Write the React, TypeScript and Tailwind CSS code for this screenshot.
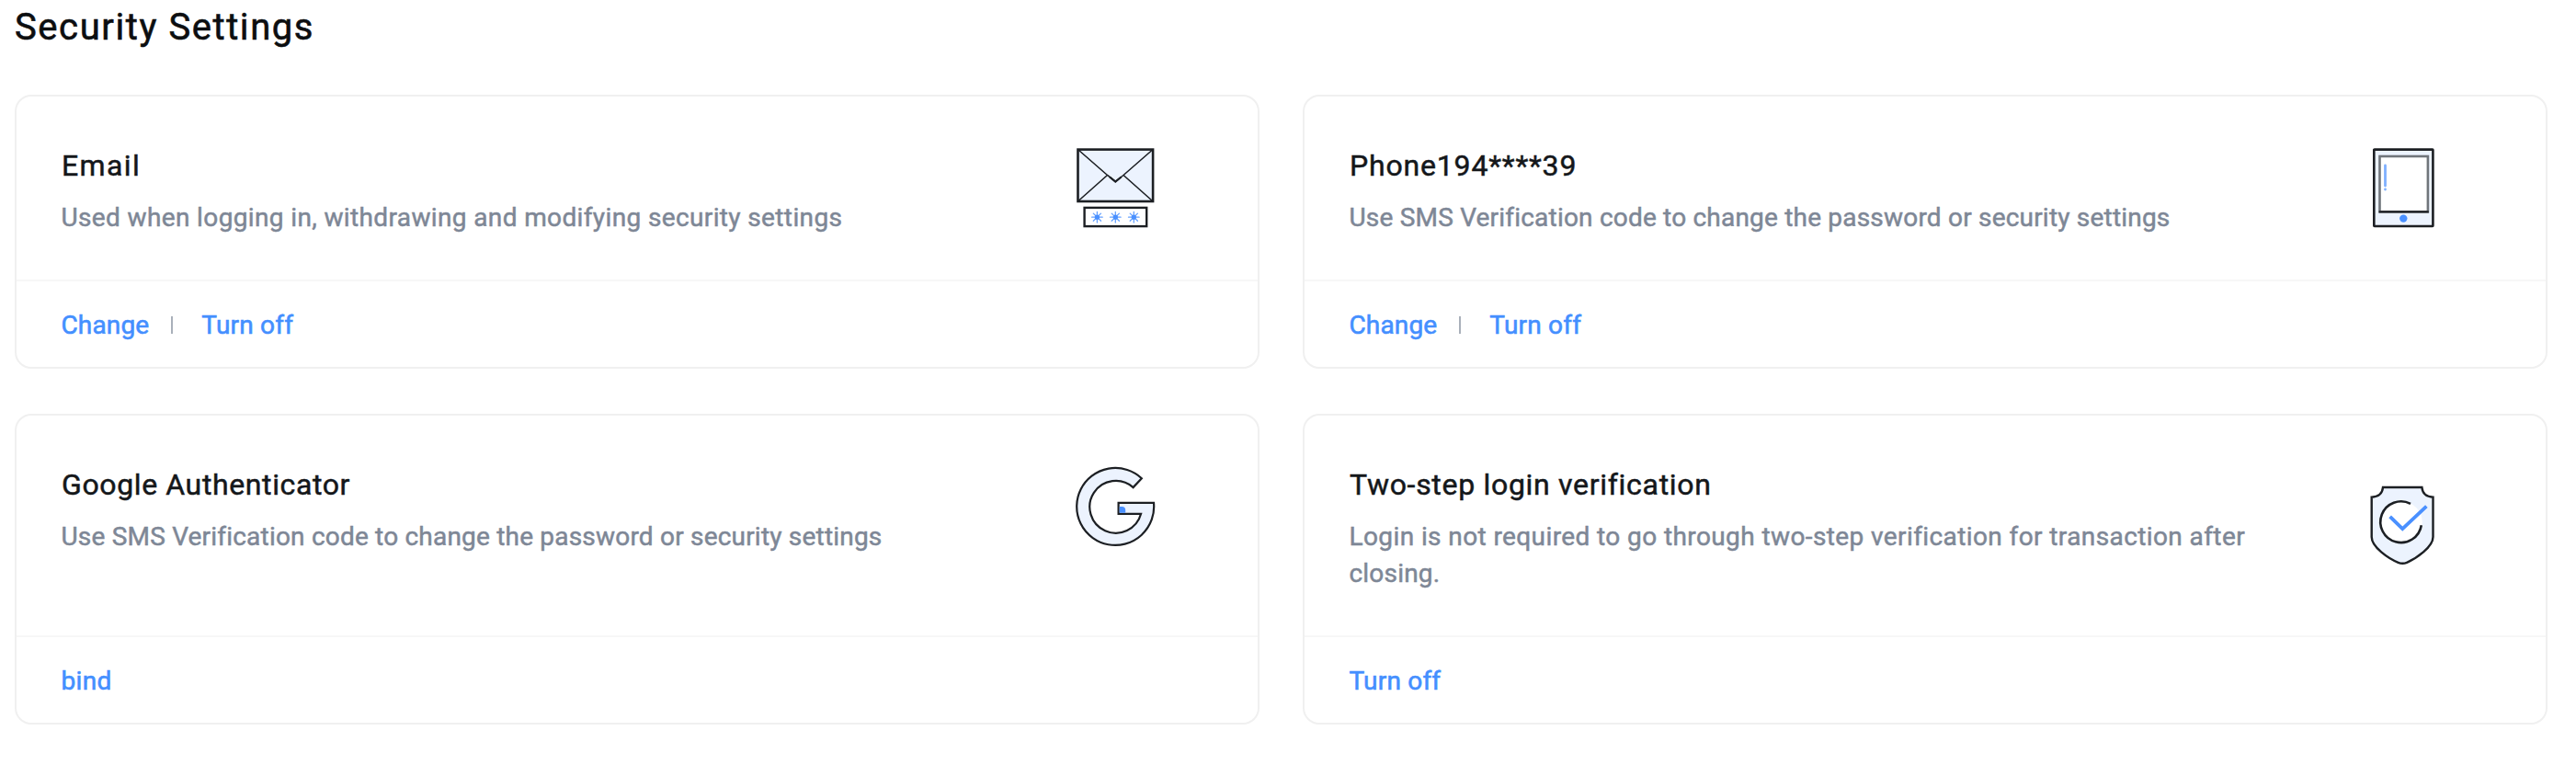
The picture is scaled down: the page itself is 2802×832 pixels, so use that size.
import React from "react";

const INK = "#1c1f23";
const TINT = "#ecf3fe";
const BLUE = "#4a90ff";

function Star({ x, y }: { x: number; y: number }) {
  return (
    <g transform={`translate(${x} ${y})`} stroke={BLUE} strokeWidth="1.3" strokeLinecap="round">
      <path d="M-5.8 0H5.8M0 -5.8V5.8M-4.1 -4.1L4.1 4.1M-4.1 4.1L4.1 -4.1" opacity="0.85" />
      <circle r="2.6" fill={BLUE} stroke="none" />
    </g>
  );
}

function EmailIcon() {
  return (
    <svg viewBox="0 0 88 88" className="size-22" fill="none">
      <rect x="3.5" y="2.6" width="81.6" height="56.4" fill={TINT} stroke={INK} strokeWidth="2.6" />
      <path d="M4 3L35.5 30.5L44.3 37.5L53 30.5L84.5 3M4 58.5L35.5 30.5M84.5 58.5L53 30.5" stroke={INK} strokeWidth="1.6" />
      <path d="M38 32.5L44.3 37.5L50.6 32.5" stroke={INK} strokeWidth="2.2" />
      <rect x="10.6" y="65.9" width="67.6" height="20.2" fill="#fff" stroke={INK} strokeWidth="2.4" />
      <Star x={24.4} y={76.2} />
      <Star x={44.3} y={76.2} />
      <Star x={64.3} y={76.2} />
    </svg>
  );
}

function PhoneIcon() {
  return (
    <svg viewBox="0 0 88 88" className="size-22" fill="none">
      <rect x="12.3" y="2.6" width="64.1" height="83.4" rx="0.5" fill={TINT} stroke={INK} strokeWidth="2.6" />
      <rect x="18.5" y="10" width="52.4" height="60.3" fill="#fff" stroke="#70757b" strokeWidth="2.6" />
      <path d="M17.6 70.4H71.8" stroke={INK} strokeWidth="2.4" />
      <path d="M24.5 20V42" stroke="#7fb0ff" strokeWidth="2.8" strokeLinecap="round" />
      <circle cx="24.5" cy="46" r="1.4" fill="#7fb0ff" />
      <circle cx="44.3" cy="77.6" r="4.2" fill={BLUE} />
    </svg>
  );
}

function GoogleIcon() {
  return (
    <svg viewBox="0 0 88 88" className="size-22" fill="none">
      <path
        d="M72.8 13.2A42 42 0 1 0 86 39.9H47.6V51.8H72.1A28.4 28.4 0 1 1 63.6 23.1Z"
        fill={TINT}
        stroke={INK}
        strokeWidth="2.2"
      />
      <path d="M48.7 44H51.4A3.8 3.8 0 0 1 55.2 47.8V50.7H48.7Z" fill={BLUE} />
    </svg>
  );
}

function ShieldIcon() {
  return (
    <svg viewBox="0 0 88 88" className="size-22" fill="none">
      <path
        d="M22 3H64.4C65 9.5 69.5 13.4 76.5 13.7V57C76.5 68 58 80.5 48 84.8Q43.3 86.8 38.6 84.8C28 80.5 9.7 68 9.7 57V13.7C17 13.4 21.4 9.5 22 3Z"
        fill={TINT}
        stroke={INK}
        strokeWidth="2.4"
      />
      <circle cx="42.2" cy="41" r="22.6" fill="#fff" />
      <path d="M52 20.8A22.4 22.4 0 1 0 63.8 44.2" stroke={INK} strokeWidth="2.6" />
      <path d="M31 36.2L43.3 48.2L68 25" stroke={BLUE} strokeWidth="3.8" strokeLinecap="square" />
    </svg>
  );
}

type Label = { text: string; tracking: string };
type CardProps = { title: Label; lines: Label[]; icon: React.ReactNode; actions: Label[] };

function Card({ title, lines, icon, actions }: CardProps) {
  return (
    <section className="flex flex-col rounded-[18px] border-2 border-[#f0f0f0] bg-white">
      <div className="flex items-center justify-between pt-[51px] pr-[111px] pb-[47px] pl-12">
        <div>
          <h2
            className={`pl-px text-[32px] leading-[48px] text-[#14171a] [-webkit-text-stroke:0.5px] ${title.tracking}`}
          >
            {title.text}
          </h2>
          <p className="mt-[13px] pl-[0.5px] text-[28px] leading-10 whitespace-nowrap text-[#7e8796] [-webkit-text-stroke:0.5px]">
            {lines.map((line) => (
              <span key={line.text} className={`block ${line.tracking}`}>
                {line.text}
              </span>
            ))}
          </p>
        </div>
        <div className="mb-[5px] shrink-0">{icon}</div>
      </div>
      <div className="mt-auto flex h-[95px] items-center border-t-2 border-[#f7f7f7] pt-[2px] pl-[48.5px] text-[28px] leading-10 text-[#448fff] [-webkit-text-stroke:0.6px]">
        {actions.map((action, i) => (
          <React.Fragment key={action.text}>
            {i > 0 && <span className="mr-[31px] ml-6 h-[19px] w-[2px] bg-[#a9b0ba]" />}
            <a className={action.tracking}>{action.text}</a>
          </React.Fragment>
        ))}
      </div>
    </section>
  );
}

const change: Label = { text: "Change", tracking: "tracking-[0.15px]" };
const turnOff: Label = { text: "Turn off", tracking: "tracking-[0.2px]" };
const smsHint: Label = {
  text: "Use SMS Verification code to change the password or security settings",
  tracking: "tracking-[0.2px]",
};

export default function App() {
  return (
    <main className="h-[832px] bg-white pr-[31px] pl-4 font-[Roboto,sans-serif]">
      <h1 className="mb-11 text-[40px] leading-[59px] tracking-[1.58px] text-[#0c0e10] [-webkit-text-stroke:0.6px]">
        Security Settings
      </h1>
      <div className="grid grid-cols-[1354px_1354px] justify-between gap-y-[49px]">
        <Card
          title={{ text: "Email", tracking: "tracking-[1.4px]" }}
          lines={[
            {
              text: "Used when logging in, withdrawing and modifying security settings",
              tracking: "tracking-[0.37px]",
            },
          ]}
          icon={<EmailIcon />}
          actions={[change, turnOff]}
        />
        <Card
          title={{ text: "Phone194****39", tracking: "tracking-[0.82px]" }}
          lines={[smsHint]}
          icon={<PhoneIcon />}
          actions={[change, turnOff]}
        />
        <Card
          title={{ text: "Google Authenticator", tracking: "tracking-[0.62px]" }}
          lines={[smsHint]}
          icon={<GoogleIcon />}
          actions={[{ text: "bind", tracking: "tracking-[0.3px]" }]}
        />
        <Card
          title={{ text: "Two-step login verification", tracking: "tracking-[0.7px]" }}
          lines={[
            {
              text: "Login is not required to go through two-step verification for transaction after",
              tracking: "tracking-[0.4px]",
            },
            { text: "closing.", tracking: "tracking-[0.2px]" },
          ]}
          icon={<ShieldIcon />}
          actions={[turnOff]}
        />
      </div>
    </main>
  );
}
